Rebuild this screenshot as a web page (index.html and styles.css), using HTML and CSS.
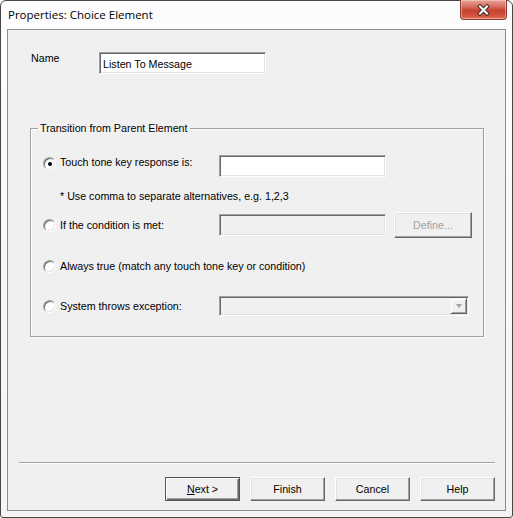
FILE: index.html
```html
<!DOCTYPE html>
<html lang="en">
<head>
  <meta charset="UTF-8">
  <title>Properties: Choice Element</title>
  <link rel="stylesheet" href="styles.css">
</head>
<body>
  <div class="window">
    <div class="titlebar">
      <span class="title">Properties: Choice Element</span>
      <span class="close">
        <svg width="13" height="12" viewBox="0 0 13 12">
          <path d="M3 2.5 L10 9.5 M10 2.5 L3 9.5" stroke="#4a2a26" stroke-width="4" stroke-linecap="square"/>
          <path d="M3 2.5 L10 9.5 M10 2.5 L3 9.5" stroke="#fff" stroke-width="2" stroke-linecap="square"/>
        </svg>
      </span>
    </div>

    <div class="client">
      <div class="name-row">
        <label class="name-label" for="name">Name</label>
        <input type="text" id="name" class="field name-field" value="Listen To Message">
      </div>

      <fieldset class="group">
        <legend>Transition from Parent Element</legend>

        <div class="opt opt-touch">
          <span class="radio checked"></span>
          <span class="opt-label">Touch tone key response is:</span>
          <input type="text" class="field">
        </div>
        <div class="hint">* Use comma to separate alternatives, e.g. 1,2,3</div>

        <div class="opt opt-cond">
          <span class="radio"></span>
          <span class="opt-label">If the condition is met:</span>
          <input type="text" class="field" disabled>
          <button class="btn define" disabled>Define...</button>
        </div>

        <div class="opt opt-always">
          <span class="radio"></span>
          <span class="opt-label">Always true (match any touch tone key or condition)</span>
        </div>

        <div class="opt opt-exc">
          <span class="radio"></span>
          <span class="opt-label">System throws exception:</span>
          <div class="combo">
            <span class="combo-arrow"></span>
          </div>
        </div>
      </fieldset>

      <div class="footer">
        <div class="sep"></div>
        <div class="buttons">
          <button class="btn default"><u>N</u>ext &gt;</button>
          <button class="btn">Finish</button>
          <button class="btn">Cancel</button>
          <button class="btn">Help</button>
        </div>
      </div>
    </div>
  </div>
</body>
</html>
```

FILE: styles.css
```css
body {
  margin: 0;
  background: #fff;
  font-family: "Liberation Sans", Arial, sans-serif;
  font-size: 10.7px;
  color: #000;
}

.window {
  width: 513px;
  height: 518px;
  box-sizing: border-box;
  border: 1px solid #474747;
  border-radius: 6px 6px 3px 3px;
  background: linear-gradient(#fdfdfd, #f4f4f4);
  display: flex;
  flex-direction: column;
}

/* title bar */
.titlebar {
  height: 28px;
  display: flex;
  align-items: flex-start;
}
.title {
  font-family: "Open Sans", "Noto Sans", sans-serif;
  font-size: 11.5px;
  line-height: 16px;
  margin: 6px 0 0 7px;
}
.close {
  margin-left: auto;
  margin-right: 5px;
  margin-top: -1px;
  width: 45px;
  height: 19px;
  border: 1px solid #8d3a32;
  border-top: none;
  border-radius: 0 0 4px 4px;
  background: linear-gradient(#e9a395 0%, #d66d5e 35%, #c7412f 55%, #d4553f 85%, #e07a5f 100%);
  box-shadow: inset 0 0 0 1px rgba(255, 255, 255, 0.35);
  display: flex;
  align-items: center;
  justify-content: center;
}

/* client area */
.client {
  flex: 1;
  margin: 0 6px 6px 6px;
  border: 1px solid #8c8c8c;
  background: #f0f0f0;
  display: flex;
  flex-direction: column;
}

.name-row {
  display: flex;
  align-items: flex-start;
  padding: 22px 0 0 23px;
}
.name-label {
  width: 68px;
  line-height: 13px;
  margin-top: 0;
}

.field {
  box-sizing: border-box;
  height: 22px;
  width: 167px;
  margin: 0;
  padding: 0 3px;
  font: inherit;
  color: #000;
  background: #fff;
  border: 1px solid;
  border-color: #a0a0a0 #fff #fff #a0a0a0;
  box-shadow: inset 1px 1px 0 #696969, inset -1px -1px 0 #e3e3e3;
  outline: none;
}
.field:disabled {
  background: #f0f0f0;
}
.name-field {
  padding-top: 1px;
}

/* group box */
.group {
  box-sizing: border-box;
  width: 454px;
  margin: 48px 0 0 22px;
  padding: 0 0 20px 12px;
  border: 1px solid #a0a0a0;
  box-shadow: inset 1px 1px 0 #fff, 1px 1px 0 #fff;
  min-width: 0;
}
.group legend {
  margin-left: -5px;
  padding: 0 2px;
  line-height: 13px;
}

.opt {
  display: flex;
  align-items: flex-start;
}
.opt-label {
  width: 159px;
  line-height: 13px;
  white-space: nowrap;
}
.opt-touch { margin-top: 20px; height: 22px; }
.opt-touch .radio { margin-top: 2px; }
.opt-touch .opt-label { margin-top: 1px; }

.hint {
  margin: 13px 0 0 17px;
  line-height: 13px;
}

.opt-cond { margin-top: 9px; height: 26px; }
.opt-cond .radio,
.opt-cond .opt-label { margin-top: 7px; }
.opt-cond .field { margin-top: 2px; }

.opt-always { margin-top: 22px; }

.opt-exc { margin-top: 23px; height: 20px; }
.opt-exc .radio,
.opt-exc .opt-label { margin-top: 4px; }

/* radio buttons */
.radio {
  position: relative;
  box-sizing: border-box;
  flex: none;
  width: 13px;
  height: 13px;
  margin-right: 4px;
  border-radius: 50%;
  border: 1px solid;
  border-color: #a0a0a0 #fff #fff #a0a0a0;
  background: #fff;
  box-shadow: inset 1px 1px 0 #696969, inset -1px -1px 0 #e3e3e3;
}
.radio.checked::after {
  content: "";
  position: absolute;
  left: 3.5px;
  top: 3.5px;
  width: 4px;
  height: 4px;
  border-radius: 50%;
  background: #000;
}

/* buttons */
.btn {
  box-sizing: border-box;
  width: 75px;
  height: 24px;
  margin: 0;
  padding: 0;
  font: inherit;
  color: #000;
  background: #f0f0f0;
  border: 1px solid;
  border-color: #fff #696969 #696969 #fff;
  box-shadow: inset -1px -1px 0 #a0a0a0, inset 1px 1px 0 #e3e3e3;
}
.btn.default {
  border: 1px solid #555;
  box-shadow: inset 1px 1px 0 #fff, inset -1px -1px 0 #696969, inset -2px -2px 0 #a0a0a0;
}
.btn u {
  text-decoration: underline;
}
.define {
  width: 78px;
  height: 26px;
  margin-left: 8px;
  color: #a0a0a0;
}

/* combo */
.combo {
  position: relative;
  box-sizing: border-box;
  width: 250px;
  height: 20px;
  background: #f0f0f0;
  border: 1px solid;
  border-color: #a0a0a0 #fff #fff #a0a0a0;
  box-shadow: inset 1px 1px 0 #696969, inset -1px -1px 0 #e3e3e3;
  display: flex;
  justify-content: flex-end;
  padding: 1px;
}
.combo-arrow {
  box-sizing: border-box;
  width: 17px;
  height: 16px;
  background: #f0f0f0;
  border: 1px solid;
  border-color: #f0f0f0 #696969 #696969 #f0f0f0;
  box-shadow: inset 1px 1px 0 #fff, inset -1px -1px 0 #a0a0a0;
  display: flex;
  align-items: center;
  justify-content: center;
}
.combo-arrow::after {
  content: "";
  border-left: 3.5px solid transparent;
  border-right: 3.5px solid transparent;
  border-top: 4px solid #a0a0a0;
}

/* footer */
.footer {
  margin-top: auto;
  padding: 0 10px 9px 11px;
}
.sep {
  border-top: 1px solid #a0a0a0;
  border-bottom: 1px solid #fff;
  margin-bottom: 13px;
}
.buttons {
  display: flex;
  justify-content: flex-end;
  gap: 10px;
}
```
